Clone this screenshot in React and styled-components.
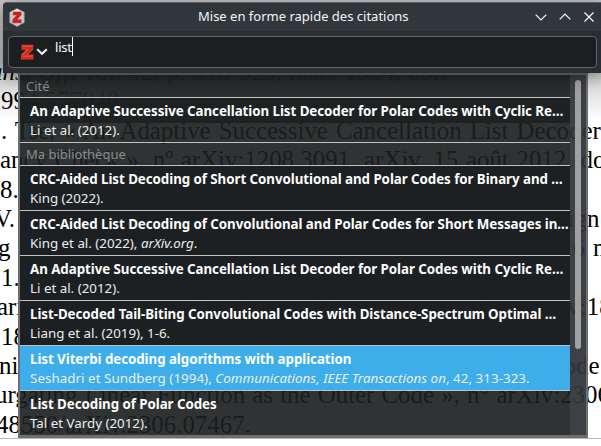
import React from "react";
import styled, { createGlobalStyle, css } from "styled-components";

const Global = createGlobalStyle`
  * { box-sizing: border-box; }
  body { margin: 0; background: #fff; overflow: hidden; }
`;

const Desktop = styled.div`
  position: relative;
  width: 601px;
  height: 446px;
  overflow: hidden;
  background: #fff;
  font-family: "Noto Sans", sans-serif;
`;

const Page = styled.div`
  height: 439px;
  overflow: hidden;
  padding-top: 57px;
  background: linear-gradient(#c6c6c6, #c0c0c0 60px, #d4d4d4 80px, #fff 120px);
  border-bottom: 1px solid #b5b6b7;
  color: #000;
  font-family: "Liberation Serif", serif;
  font-size: 24.9px;
`;

const Line = styled.div`
  height: 29.4px;
  line-height: 29.4px;
  white-space: pre;
  margin-left: ${(p) => p.$x}px;
  word-spacing: ${(p) => p.$gap || 0}px;
`;

const Dialog = styled.section`
  position: absolute;
  left: 3px;
  top: 2px;
  width: 600px;
  height: 71px;
  border-radius: 4px 0 0 0;
  background: #2a2e32;
  border-top: 1px solid #596067;
  box-shadow: 0 3px 16px rgba(0, 0, 0, 0.42);
`;

const TitleBar = styled.header`
  display: grid;
  grid-template-columns: 195px 1fr auto;
  align-items: center;
  height: 28px;
  padding: 0 8px 0 5px;
  border-radius: 4px 0 0 0;
  background: linear-gradient(#30353a, #33383d);
  color: #f4f5f5;
  font-size: 13px;
  svg { display: block; }
`;

const Title = styled.span`
  margin-left: -5px;
  line-height: 18px;
  padding-bottom: 2px;
`;

const WindowButtons = styled.div`
  display: flex;
  gap: 10px;
  margin-right: -1px;
  padding-bottom: 1px;
`;

const SearchBox = styled.div`
  display: flex;
  height: 32px;
  margin: 5px 6px 0 5px;
  padding: 0 0 0 11px;
  border: 1px solid #606468;
  border-radius: 4px;
  background: #1b1f22;
  color: #fcfcfc;
  font-size: 13px;
`;

const SourceButton = styled.div`
  display: flex;
  align-items: center;
  gap: 2px;
  width: 35px;
`;

const Query = styled.span`
  height: 19px;
  line-height: 21px;
  letter-spacing: -0.2px;
  border-right: 1px solid #fff;
`;

const Popup = styled.section`
  position: absolute;
  left: 18px;
  top: 73px;
  width: 570px;
  height: 365px;
  display: flex;
  border: 2px solid #6b6f72;
  border-bottom-width: 3px;
`;

const Results = styled.div`
  width: 550px;
  overflow: hidden;
`;

const Group = styled.div`
  height: 23px;
  padding-left: 6px;
  border-bottom: 1px solid #c1c3c3;
  background: ${(p) => (p.$shade ? "linear-gradient(rgba(31,34,35,.97), rgba(36,40,41,.96))" : "rgba(27,31,32,.908)")};
  color: #8b8d8e;
  font-size: 13px;
  line-height: 23px;
`;

const Item = styled.article`
  height: 45px;
  padding: 4px 0 0 10px;
  border-bottom: 1px solid #c1c3c3;
  color: #fcfcfc;
  background: ${(p) =>
    p.$look === "split"
      ? "linear-gradient(rgba(27,31,32,.99) 25px, rgba(27,31,32,.908) 25px)"
      : p.$look === "clear"
        ? "rgba(27,31,32,.908)"
        : "rgba(27,31,33,.995)"};
  ${(p) => p.$selected && css`background: #3daee9;`}
`;

const Heading = styled.div`
  height: 18px;
  white-space: nowrap;
  font-size: 13.33px;
  letter-spacing: -0.055px;
  font-weight: 700;
  line-height: 18px;
`;

const Detail = styled.div`
  margin-top: 1px;
  font-size: 13.33px;
  line-height: 18px;
  letter-spacing: ${(p) => p.$spacing || 0}px;
  color: #eceded;
  white-space: nowrap;
`;

const Scrollbar = styled.div`
  width: 16px;
  padding: 5px 0 0 5px;
  background: rgba(49, 52, 57, 0.94);
`;

const Thumb = styled.div`
  width: 6px;
  height: 269px;
  border-radius: 3px;
  background: #a0a0a0;
`;

const Z = "M2.2 1.2H13.6V5.2L7.4 11H13.8V15H1.6V11L7.8 5.2H2.2Z";

function AppIcon() {
  return (
    <svg width="18" height="19" viewBox="0 0 18 18" preserveAspectRatio="none">
      <path d="M9 .5 16.3 4v9.8L9 17.5 1.7 13.8V4Z" fill="#c9c8c7" stroke="#8f8f8f" strokeWidth=".6" />
      <path d="m9 1 6.5 3.2L9 7 2.5 4.2Z" fill="#e8e7e6" />
      <g transform="translate(3.6 2.8) scale(.7 .75)">
        <path d={Z} fill="#d41b22" stroke="#a81c20" strokeWidth=".6" />
      </g>
    </svg>
  );
}

function ZoteroMark() {
  return (
    <svg width="14" height="17" viewBox="0 0 15 17" preserveAspectRatio="none">
      <path d={Z} fill="#c92a1b" stroke="#e23b2c" strokeWidth="1.1" />
      <path d="M3 2.3H12.6M8.8 5.4 3.3 10.8M3 12.2H12.6" stroke="#ee6553" strokeWidth=".8" />
    </svg>
  );
}

function Chevron({ up }) {
  return (
    <svg width="14" height="14" viewBox="0 0 14 14">
      <path d={up ? "M1.7 9.4 7 4.1l5.3 5.3" : "M1.7 4.6 7 9.9l5.3-5.3"} fill="none" stroke="#fcfcfc" strokeWidth="1.2" />
    </svg>
  );
}

const lines = [
  { x: -10, gap: 1, text: <><i>ans. Off</i>, vol. 42, p. 313‑323, mars 1994, doi:</> },
  { x: 1, text: "994.577040." },
  { x: 1, gap: 1.8, text: ". Tse, « An Adaptive Successive Cancellation List Decoder for" },
  { x: 0, gap: 1.6, text: "ancy Check », nº arXiv:1208.3091. arXiv, 15 août 2012. doi:" },
  { x: 0, text: "8." },
  { x: -6, gap: -0.2, text: "V. King, « CRC-Aided List Decoding of Codes Short Design" },
  { x: -2, gap: 1.9, text: "g Convolutional Codes », nº arXiv:2104.06029. arXiv, 16 mars" },
  { x: 1, text: "1." },
  { x: -3, gap: 2.1, text: "ari, « List-Decoded Tail-Biting Convolutional C nº arXiv:1804" },
  { x: 1, text: "18." },
  { x: -1, gap: 0.4, text: "ning Codes, Viterbi Decoding Algorithms and the List Code." },
  { x: -5, gap: 0.9, text: "urgating Linear Function as the Outer Code », n° arXiv:2306" },
  { x: -4, text: "48550/arXiv.2306.07467." },
];

const cyclic = "An Adaptive Successive Cancellation List Decoder for Polar Codes with Cyclic Re…";

const library = [
  { title: "CRC-Aided List Decoding of Short Convolutional and Polar Codes for Binary and …", detail: "King (2022)." },
  { title: "CRC-Aided List Decoding of Convolutional and Polar Codes for Short Messages in…", detail: <>King et al. (2022), <i>arXiv.org</i>.</> },
  { title: cyclic, detail: "Li et al. (2012)." },
  { title: "List-Decoded Tail-Biting Convolutional Codes with Distance-Spectrum Optimal …", detail: "Liang et al. (2019), 1-6." },
  { title: "List Viterbi decoding algorithms with application", detail: <>Seshadri et Sundberg (1994), <i>Communications, IEEE Transactions on</i>, 42, 313-323.</>, selected: true, spacing: 0.06 },
  { title: "List Decoding of Polar Codes", detail: "Tal et Vardy (2012).", look: "clear" },
];

function Citation({ title, detail, look, selected, spacing }) {
  return (
    <Item $look={look} $selected={selected}>
      <Heading>{title}</Heading>
      <Detail $spacing={spacing}>{detail}</Detail>
    </Item>
  );
}

export default function App() {
  return (
    <Desktop>
      <Global />
      <Page>
        {lines.map((l, i) => (
          <Line key={i} $x={l.x} $gap={l.gap}>{l.text}</Line>
        ))}
      </Page>
      <Popup>
        <Results>
          <Group $shade>Cité</Group>
          <Citation title={cyclic} detail="Li et al. (2012)." look="split" />
          <Group>Ma bibliothèque</Group>
          {library.map((c) => <Citation key={c.title} {...c} />)}
        </Results>
        <Scrollbar><Thumb /></Scrollbar>
      </Popup>
      <Dialog>
        <TitleBar>
          <AppIcon />
          <Title>Mise en forme rapide des citations</Title>
          <WindowButtons>
            <Chevron />
            <Chevron up />
            <svg width="14" height="14" viewBox="0 0 14 14">
              <path d="m2.5 2.5 9 9m0-9-9 9" stroke="#fcfcfc" strokeWidth="1.2" />
            </svg>
          </WindowButtons>
        </TitleBar>
        <SearchBox>
          <SourceButton>
            <ZoteroMark />
            <svg width="12" height="8" viewBox="0 0 12 8">
              <path d="m1.2 1.2 4.8 4.6 4.8-4.6" fill="none" stroke="#f5f5f5" strokeWidth="2" />
            </svg>
          </SourceButton>
          <Query>list</Query>
        </SearchBox>
      </Dialog>
    </Desktop>
  );
}
